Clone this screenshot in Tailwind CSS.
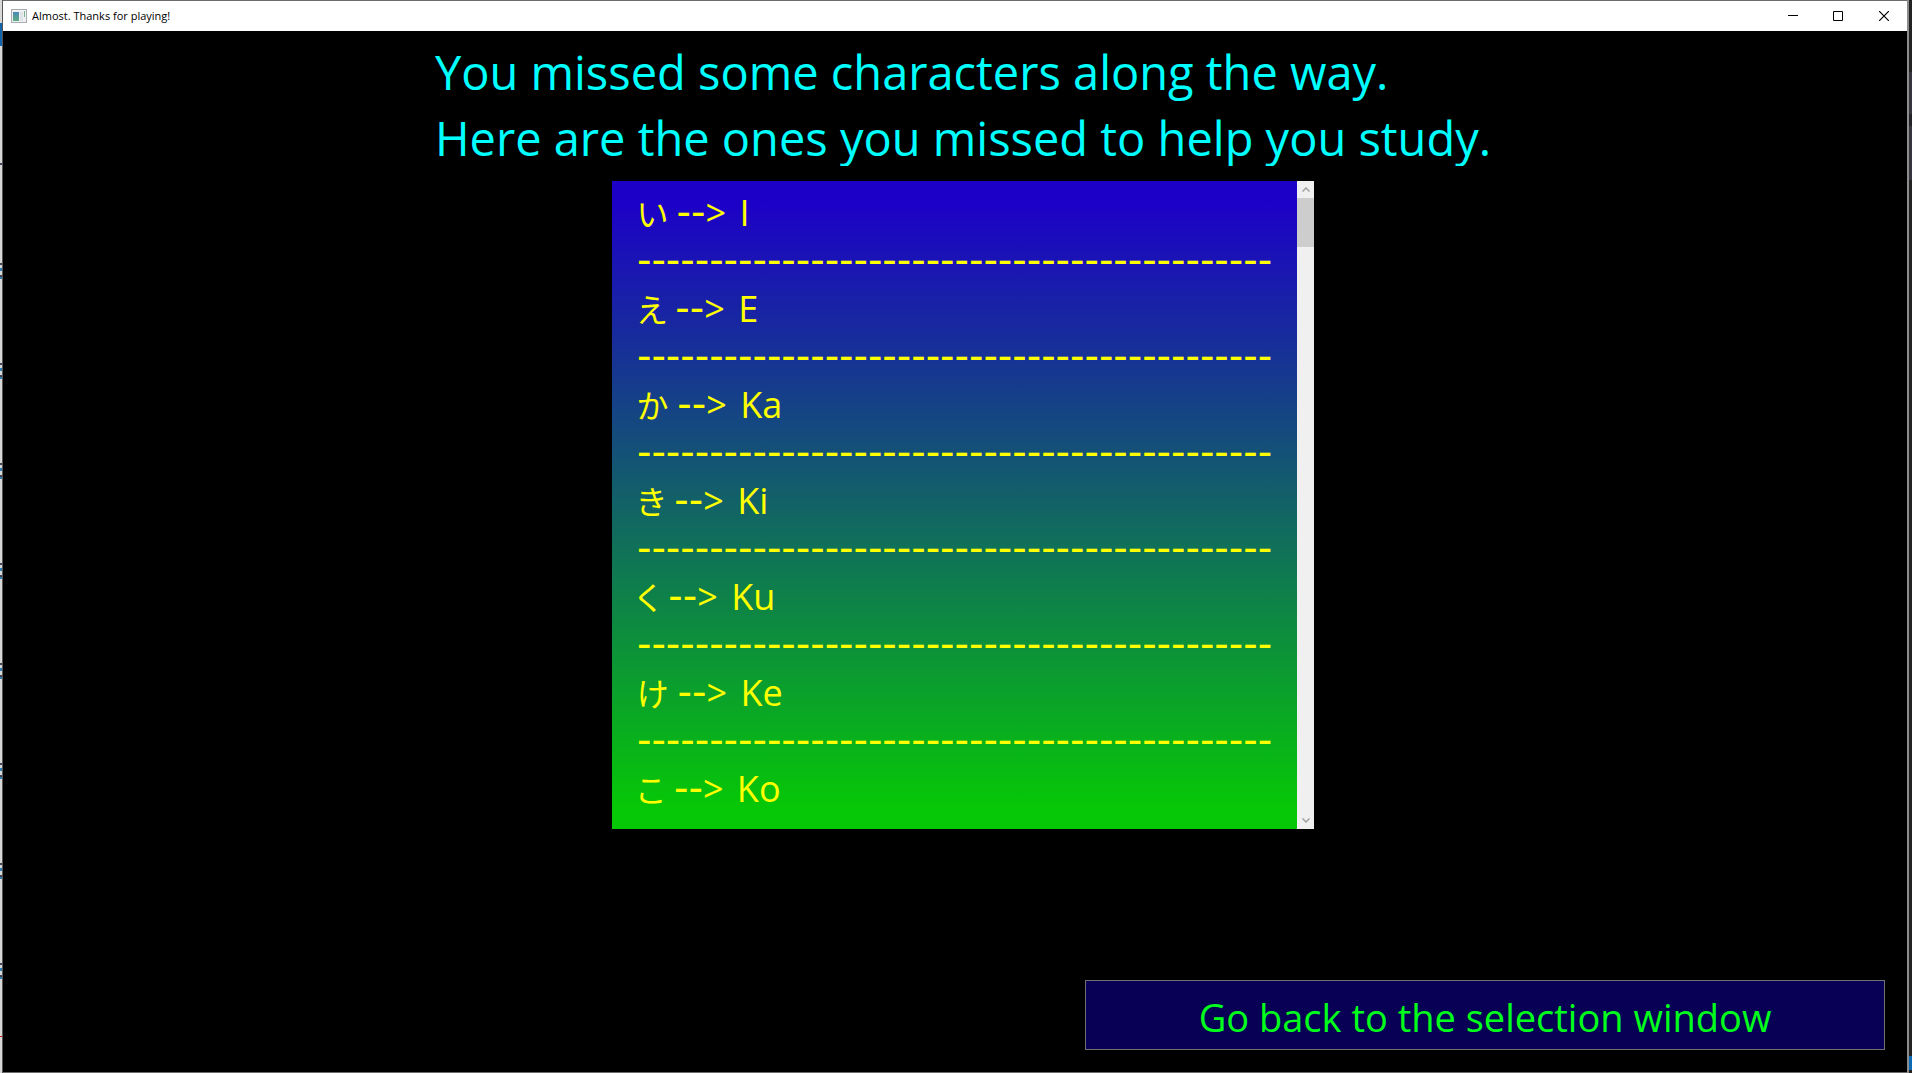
<!DOCTYPE html>
<html lang="en">
<head>
<meta charset="utf-8">
<title>Almost. Thanks for playing!</title>
<script src="https://cdn.jsdelivr.net/npm/@tailwindcss/browser@4"></script>
</head>
<body class="h-screen overflow-hidden bg-black font-['Open_Sans','Noto_Sans_CJK_JP',sans-serif]">
<div class="flex h-full">
  <!-- sliver of the desktop left of the window -->
  <div class="flex w-[3px] shrink-0 flex-col border-r border-[#555] bg-[#d8d8d8]">
    <div class="mt-[23px] h-[23px] shrink-0 bg-[#1464ad]"></div>
    <div class="mt-[117px] h-[2px] shrink-0 bg-[#445]"></div>
    <div class="mt-[98px] flex-1 bg-[repeating-linear-gradient(#445_0_2px,#d8d8d8_2px_5px,#2f7fb5_5px_8px,#d8d8d8_8px_12px,#445_12px_14px,#2f7fb5_14px_16px,#d8d8d8_16px_100px)]"></div>
    <div class="mb-[36px] h-px shrink-0 bg-[#e01010]"></div>
  </div>
  <div class="flex min-w-0 flex-1 flex-col border-y border-[#6b6b6b] bg-black">
    <header class="flex h-[30px] shrink-0 items-center bg-white">
      <svg class="ml-2 h-[14px] w-4" viewBox="0 0 16 14"><defs><linearGradient id="g" x2="0" y2="1"><stop stop-color="#4a86b8"/><stop offset="1" stop-color="#5cae80"/></linearGradient></defs><rect x=".5" y=".5" width="15" height="13" fill="#eef0f2" stroke="#a9adb3"/><rect x="2" y="3" width="6" height="9" fill="url(#g)"/><rect x="9" y="3" width="3" height="9" fill="#dde4e8"/><rect x="13" y="2" width="1" height="6" fill="#7db395"/></svg>
      <span class="ml-[5px] flex-1 text-[11px]/4 text-black">Almost. Thanks for playing!</span>
      <button class="flex h-full w-[45px] items-center justify-center" aria-label="Minimize"><svg class="size-[10px]" viewBox="0 0 10 10"><path d="M0 4.5h10" stroke="#000"/></svg></button>
      <button class="flex h-full w-[45px] items-center justify-center" aria-label="Maximize"><svg class="size-[10px]" viewBox="0 0 10 10"><path d="M.5.5h9v9h-9z" fill="none" stroke="#000"/></svg></button>
      <button class="flex h-full w-[47px] items-center justify-center" aria-label="Close"><svg class="size-[10px]" viewBox="0 0 10 10"><path d="M0 0l10 10M10 0L0 10" stroke="#000" stroke-width="1.2"/></svg></button>
    </header>
    <main class="flex flex-1 flex-col items-center pl-4">
      <h1 class="mt-2 h-[127px] overflow-hidden text-[47px]/[66px] text-[#00ffff]">You missed some characters along the way.<br>Here are the ones you missed to help you study.</h1>
      <div class="mt-[15px] flex h-[648px] w-[702px] overflow-hidden">
        <ul class="flex-1 overflow-hidden bg-linear-to-b/srgb from-[#1c00c8] from-3% via-[#125e6a] via-48% to-[#06c806] to-97% pt-[7px] pl-[25px] text-[36px]/[48px] whitespace-nowrap text-[#ffff00] [font-feature-settings:'palt']">
          <li class="h-[48px]"><span class="text-[32px]/[48px]">い</span> <span class="font-['DejaVu_Sans'] text-[40px]/[48px]">--</span><span class="mr-1">&gt;</span> I</li>
          <li class="h-[48px] font-['DejaVu_Sans'] text-[40px]/[48px]">--------------------------------------------</li>
          <li class="h-[48px]"><span class="text-[32px]/[48px]">え</span> <span class="font-['DejaVu_Sans'] text-[40px]/[48px]">--</span><span class="mr-1">&gt;</span> E</li>
          <li class="h-[48px] font-['DejaVu_Sans'] text-[40px]/[48px]">--------------------------------------------</li>
          <li class="h-[48px]"><span class="text-[32px]/[48px]">か</span> <span class="font-['DejaVu_Sans'] text-[40px]/[48px]">--</span><span class="mr-1">&gt;</span> Ka</li>
          <li class="h-[48px] font-['DejaVu_Sans'] text-[40px]/[48px]">--------------------------------------------</li>
          <li class="h-[48px]"><span class="text-[32px]/[48px]">き</span> <span class="font-['DejaVu_Sans'] text-[40px]/[48px]">--</span><span class="mr-1">&gt;</span> Ki</li>
          <li class="h-[48px] font-['DejaVu_Sans'] text-[40px]/[48px]">--------------------------------------------</li>
          <li class="h-[48px]"><span class="text-[32px]/[48px]">く</span> <span class="font-['DejaVu_Sans'] text-[40px]/[48px]">--</span><span class="mr-1">&gt;</span> Ku</li>
          <li class="h-[48px] font-['DejaVu_Sans'] text-[40px]/[48px]">--------------------------------------------</li>
          <li class="h-[48px]"><span class="text-[32px]/[48px]">け</span> <span class="font-['DejaVu_Sans'] text-[40px]/[48px]">--</span><span class="mr-1">&gt;</span> Ke</li>
          <li class="h-[48px] font-['DejaVu_Sans'] text-[40px]/[48px]">--------------------------------------------</li>
          <li class="h-[48px]"><span class="text-[32px]/[48px]">こ</span> <span class="font-['DejaVu_Sans'] text-[40px]/[48px]">--</span><span class="mr-1">&gt;</span> Ko</li>
        </ul>
        <div class="flex w-[17px] flex-col bg-[#f0f0f0]">
          <button class="flex h-[17px] items-center justify-center" aria-label="Scroll up"><svg class="h-[5px] w-2" viewBox="0 0 8 5"><path d="M.5 4.5L4 1l3.500 3.500" fill="none" stroke="#a0a0a0" stroke-width="1.500"/></svg></button>
          <div class="h-[49px] bg-[#cdcdcd]"></div>
          <button class="mt-auto flex h-[17px] items-center justify-center" aria-label="Scroll down"><svg class="h-[5px] w-2" viewBox="0 0 8 5"><path d="M.5.5L4 4l3.500-3.500" fill="none" stroke="#a0a0a0" stroke-width="1.500"/></svg></button>
        </div>
      </div>
      <button class="mt-auto mr-[22px] mb-[22px] h-[70px] w-[800px] self-end border border-[#707070] bg-[#080055] pt-1 text-[38px]/[53px] text-[#00ff1a]">Go back to the selection window</button>
    </main>
  </div>
  <!-- sliver of the desktop right of the window -->
  <div class="flex w-[5px] shrink-0 flex-col border-l-2 border-[#8c8c8c] bg-[#232325]">
    <div class="mt-[72px] h-[42px] bg-[#35353d]"></div>
    <div class="mt-[12px] h-[54px] bg-[#35353d]"></div>
    <div class="mt-auto mb-[3px] h-[14px] bg-[#0a6ab5]"></div>
  </div>
</div>
</body>
</html>
